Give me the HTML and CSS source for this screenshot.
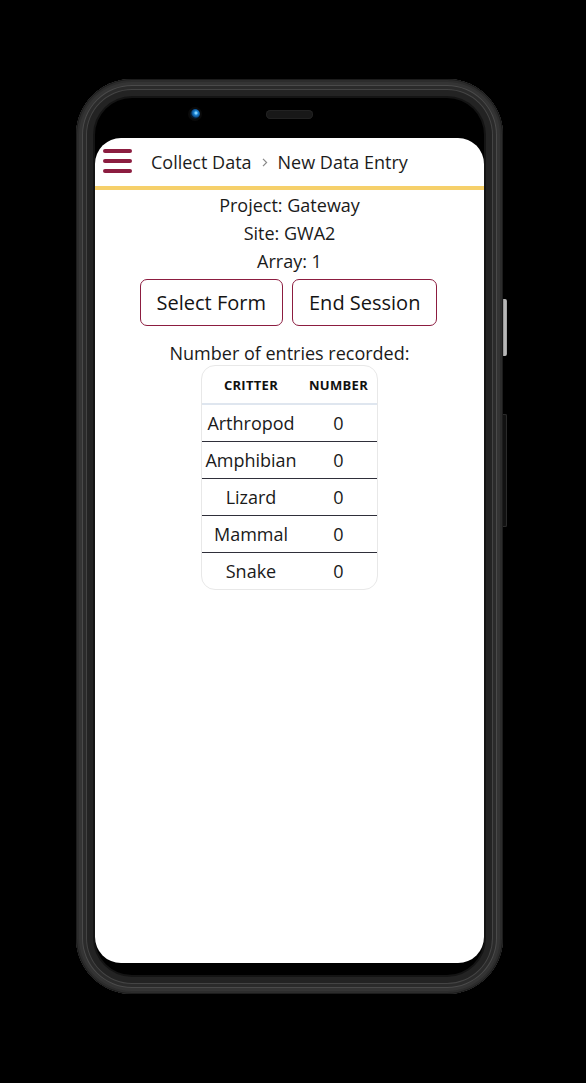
FILE: index.html
```html
<!DOCTYPE html>
<html lang="en">
<head>
<meta charset="utf-8">
<title>New Data Entry</title>
<link rel="stylesheet" href="styles.css">
</head>
<body>
<div class="phone">
  <div class="camera"></div>
  <div class="speaker"></div>
  <div class="side-btn power"></div>
  <div class="side-btn volume"></div>
  <div class="screen">
    <header class="appbar">
      <button class="menu" aria-label="Menu"><span></span><span></span><span></span></button>
      <nav class="crumbs">
        <span class="crumb">Collect Data</span>
        <svg class="chev" width="6" height="9" viewBox="0 0 6 9"><path d="M1 0.8 L4.6 4.5 L1 8.2" fill="none" stroke="#8a8a8a" stroke-width="1.2"/></svg>
        <span class="crumb">New Data Entry</span>
      </nav>
    </header>
    <main class="content">
      <p class="meta">Project: Gateway</p>
      <p class="meta">Site: GWA2</p>
      <p class="meta">Array: 1</p>
      <div class="actions">
        <button class="action">Select Form</button>
        <button class="action">End Session</button>
      </div>
      <p class="meta counts-label">Number of entries recorded:</p>
      <div class="table-wrap">
        <table class="counts">
          <colgroup><col class="c1"><col class="c2"></colgroup>
          <thead><tr><th>Critter</th><th>Number</th></tr></thead>
          <tbody>
            <tr><td>Arthropod</td><td>0</td></tr>
            <tr><td>Amphibian</td><td>0</td></tr>
            <tr><td>Lizard</td><td>0</td></tr>
            <tr><td>Mammal</td><td>0</td></tr>
            <tr><td>Snake</td><td>0</td></tr>
          </tbody>
        </table>
      </div>
    </main>
  </div>
</div>
</body>
</html>
```
FILE: styles.css
```css
html, body {
  margin: 0;
  padding: 0;
  background: #000;
}
body {
  width: 586px;
  height: 1083px;
  overflow: hidden;
  font-family: "Open Sans", "Noto Sans", sans-serif;
}
.phone {
  position: relative;
  box-sizing: border-box;
  width: 427px;
  height: 915px;
  margin: 79px 0 0 76px;
  padding: 59px 19px 31px 19px;
  border-radius: 56px;
  background: #000;
  box-shadow:
    inset 0 0 0 1px #1c1c1c,
    inset 0 0 0 3px #2c2c2c,
    inset 0 0 0 6px #343434,
    inset 0 0 0 7px #4a4a4a,
    inset 0 0 0 10px #2b2b2b,
    inset 0 0 0 11px #444444,
    inset 0 0 0 17px #232323,
    inset 0 0 0 19px #141414;
}
.camera {
  position: absolute;
  left: 114px;
  top: 30px;
  width: 10px;
  height: 10px;
  border-radius: 50%;
  background: radial-gradient(circle at 60% 40%, #7fd0ff 0 1px, #1d86d6 2px, #0b4e8f 4px, #061a2c 5px);
  box-shadow: 0 0 0 2px #0a0a0a;
}
.speaker {
  position: absolute;
  left: 190px;
  top: 31px;
  width: 47px;
  height: 9px;
  border-radius: 5px;
  background: #181818;
  box-shadow: inset 0 0 0 1px #222;
}
.side-btn {
  position: absolute;
  right: -4px;
  width: 4px;
  border-radius: 0 2px 2px 0;
}
.power {
  top: 220px;
  height: 57px;
  background: linear-gradient(90deg, #8a8a8a, #c4c4c4 50%, #9a9a9a);
}
.volume {
  top: 335px;
  height: 113px;
  background: #111;
  box-shadow: inset -1px 0 0 #2a2a2a, inset 0 1px 0 #2a2a2a, inset 0 -1px 0 #2a2a2a;
}
.screen {
  width: 389px;
  height: 825px;
  border-radius: 26px;
  background: #fff;
  overflow: hidden;
}
.appbar {
  display: flex;
  align-items: center;
  height: 48px;
  border-bottom: 4px solid #f6d06a;
  padding-left: 8px;
}
.menu {
  display: flex;
  flex-direction: column;
  gap: 6px;
  padding: 0;
  margin: -2px 0 0 0;
  border: 0;
  background: none;
}
.menu span {
  display: block;
  width: 29px;
  height: 4px;
  border-radius: 2px;
  background: #8c1d40;
}
.crumbs {
  display: flex;
  align-items: center;
  margin-left: 19px;
  gap: 10px;
  color: #1c1c1c;
  font-size: 18px;
  line-height: 24px;
}
.chev {
  margin-top: 1px;
}
.content {
  padding-top: 1px;
  text-align: center;
  color: #1a1a1a;
}
.meta {
  margin: 0;
  font-size: 18px;
  line-height: 28px;
}
.actions {
  display: flex;
  justify-content: center;
  gap: 9px;
  margin-top: 4px;
  margin-right: 2px;
}
.action {
  font-family: "Open Sans", "Noto Sans", sans-serif;
  font-size: 20px;
  line-height: 27px;
  padding: 9px 16px;
  border: 1px solid #8c1d40;
  border-radius: 7px;
  background: #fff;
  color: #141414;
}
.counts-label {
  margin-top: 15px;
  line-height: 24px;
}
.table-wrap {
  width: 175px;
  margin: 0 auto;
  border: 1px solid #e8e8e8;
  border-radius: 14px;
  overflow: hidden;
}
.counts {
  width: 100%;
  border-collapse: collapse;
  table-layout: fixed;
}
.c1 { width: 98px; }
.c2 { width: 77px; }
.counts th {
  height: 37px;
  padding: 0;
  font-size: 13px;
  font-weight: 700;
  letter-spacing: 0.3px;
  text-transform: uppercase;
  color: #111;
  border-bottom: 2px solid #dfe6ef;
}
.counts td {
  height: 36px;
  padding: 0;
  font-size: 18px;
  color: #1a1a1a;
  border-top: 1px solid #2f2f3a;
}
.counts tbody tr:first-child td {
  border-top: 0;
}
```
